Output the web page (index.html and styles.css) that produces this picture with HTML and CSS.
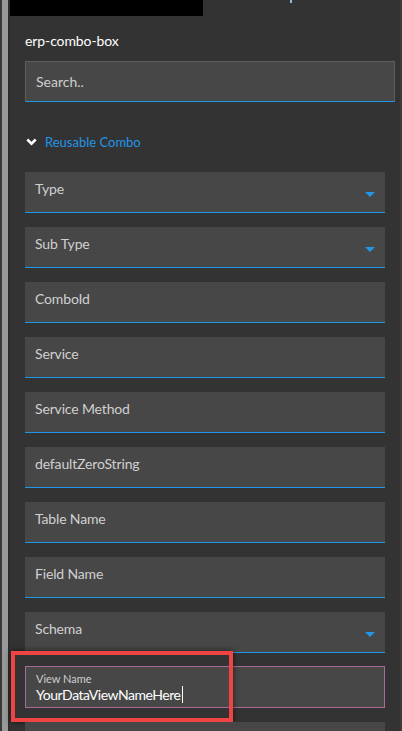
FILE: index.html
```html
<!DOCTYPE html>
<html>
<head>
<meta charset="utf-8">
<link rel="stylesheet" href="styles.css">
</head>
<body>
<div class="frame">
  <div class="edge-dark"></div>
  <div class="edge-bar"></div>
  <div class="edge-gap"></div>
  <div class="panel">
    <div class="topbar">
      <div class="black-block"></div>
      <span class="cut-glyph"></span>
    </div>
    <div class="title">erp-combo-box</div>
    <div class="search">Search..</div>
    <div class="separator"></div>
    <div class="section">
      <div class="section-head">
        <svg class="chevron" width="11" height="8" viewBox="0 0 11 8"><polyline points="1.3,1.5 5.5,5.6 9.7,1.5" fill="none" stroke="#ffffff" stroke-width="2.6"/></svg>
        <span class="section-title">Reusable Combo</span>
      </div>
      <div class="fields">
        <div class="field"><span class="label">Type</span><span class="arrow"></span></div>
        <div class="field"><span class="label">Sub Type</span><span class="arrow"></span></div>
        <div class="field"><span class="label">ComboId</span></div>
        <div class="field"><span class="label">Service</span></div>
        <div class="field"><span class="label">Service Method</span></div>
        <div class="field"><span class="label">defaultZeroString</span></div>
        <div class="field"><span class="label">Table Name</span></div>
        <div class="field"><span class="label">Field Name</span></div>
        <div class="field"><span class="label">Schema</span><span class="arrow"></span></div>
        <div class="field focused">
          <span class="small-label">View Name</span>
          <span class="value">YourDataViewNameHere<span class="caret"></span></span>
          <div class="highlight"></div>
        </div>
        <div class="field"></div>
      </div>
    </div>
  </div>
  <div class="edge-right"></div>
</div>
</body>
</html>
```
FILE: styles.css
```css
html, body {
  margin: 0;
  padding: 0;
  background: #333333;
  overflow: hidden;
}
body {
  font-family: "Lato", "Open Sans", sans-serif;
  color: #d0d0d0;
}
.frame {
  display: flex;
  width: 402px;
  height: 731px;
  overflow: hidden;
}
.edge-dark { width: 2px; background: #3a3a3a; }
.edge-bar { width: 6px; background: #999999; }
.edge-gap { width: 2px; background: #2c2c2c; }
.edge-right { width: 2px; background: #3b3b3b; }
.panel {
  flex: 1;
  background: #333333;
  display: flex;
  flex-direction: column;
}
.topbar {
  height: 16px;
  display: flex;
  position: relative;
}
.black-block {
  width: 193px;
  height: 16px;
  background: #000000;
}
.cut-glyph {
  position: absolute;
  left: 280px;
  top: 0;
  width: 2px;
  height: 3px;
  background: #9fb8d0;
}
.title {
  margin: 15px 0 0 15px;
  height: 20px;
  line-height: 20px;
  font-size: 14px;
  color: #ffffff;
  letter-spacing: -0.1px;
}
.search {
  margin: 10px 5px 0 15px;
  height: 39px;
  line-height: 40px;
  background: #474747;
  border: 1px solid #5e5e5e;
  border-bottom: 1px solid #2196e8;
  padding-left: 10px;
  font-size: 14px;
  color: #cfcfcf;
}
.separator {
  margin-top: 19px;
  height: 2px;
  background: #515151;
}
.section {
  padding: 2px 15px 0 15px;
}
.section-head {
  height: 38px;
  display: flex;
  align-items: center;
  padding-left: 1px;
  gap: 8px;
}
.chevron { display: block; }
.section-title {
  font-size: 13px;
  color: #2196e8;
}
.fields {
  margin-top: 11px;
  display: flex;
  flex-direction: column;
  gap: 14px;
}
.field {
  height: 40px;
  background: #474747;
  border-bottom: 1px solid #2196e8;
  position: relative;
  flex-shrink: 0;
}
.label {
  position: absolute;
  left: 10px;
  top: 8px;
  font-size: 14px;
  line-height: 18px;
  color: #d0d0d0;
  letter-spacing: -0.15px;
}
.arrow {
  position: absolute;
  right: 10px;
  top: 20px;
  width: 0;
  height: 0;
  border-left: 5px solid transparent;
  border-right: 5px solid transparent;
  border-top: 5px solid #2196e8;
}
.fields .field:nth-child(10) { margin-top: -1px; }
.field.focused {
  height: 40px;
  border: 1px solid #a86b98;
}
.small-label {
  position: absolute;
  left: 10px;
  top: 5px;
  font-size: 11px;
  line-height: 14px;
  color: #cfcfcf;
}
.value {
  position: absolute;
  left: 10px;
  top: 19px;
  font-size: 14px;
  line-height: 18px;
  color: #ffffff;
  letter-spacing: -0.45px;
}
.caret {
  display: inline-block;
  width: 1px;
  height: 17px;
  margin-left: 1px;
  background: #ffffff;
  vertical-align: -3px;
}
.highlight {
  position: absolute;
  left: -15px;
  top: -16px;
  width: 214px;
  height: 63px;
  border: 4px solid #f04343;
  box-shadow: 0 0 6px rgba(0, 0, 0, 0.6);
  pointer-events: none;
}
.field:last-child {
  border-bottom: none;
}
```
